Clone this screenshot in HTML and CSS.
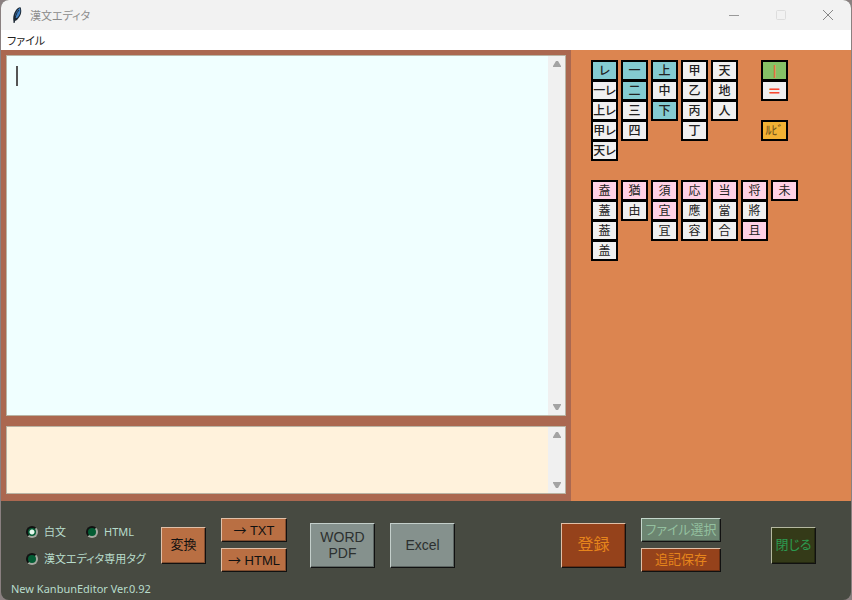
FILE: index.html
```html
<!DOCTYPE html>
<html lang="ja">
<head>
    <meta charset="UTF-8">
    <meta name="viewport" content="width=device-width, initial-scale=1.0">
    <title>漢文エディタ</title>
    <link rel="stylesheet" href="styles.css">
</head>
<body>
    <div class="window">
        <header class="titlebar">
            <svg class="app-icon" width="16" height="18" viewBox="0 0 16 18">
                <path d="M5 17 C3 12 5 5 9 2 C11 1 12 1 12 3 C13 7 11 11 8 14 L6 15 Z" fill="#1c2733"/>
                <path d="M6 12 C6 7 8 4 11 2 C12 6 11 9 8 12 Z" fill="#3f7fc1"/>
                <path d="M5 17 C6 12 7 7 10 4" fill="none" stroke="#1c2733" stroke-width="1"/>
            </svg>
            <span class="title">漢文エディタ</span>
            <div class="window-buttons">
                <button class="window-btn" aria-label="最小化">
                    <svg width="12" height="12" viewBox="0 0 12 12"><path d="M1 6.5H11" stroke="#999"/></svg>
                </button>
                <button class="window-btn" aria-label="最大化" disabled>
                    <svg width="12" height="12" viewBox="0 0 12 12"><rect x="1.5" y="1.5" width="9" height="9" rx="1" fill="none" stroke="#ddd"/></svg>
                </button>
                <button class="window-btn" aria-label="閉じる">
                    <svg width="12" height="12" viewBox="0 0 12 12"><path d="M1 1L11 11M11 1L1 11" stroke="#888" fill="none"/></svg>
                </button>
            </div>
        </header>

        <nav class="menubar">
            <button class="menu-item">ファイル</button>
        </nav>

        <main class="main">
            <section class="editor">
                <div class="text-area text-main">
                    <textarea aria-label="本文"></textarea>
                    <span class="caret"></span>
                    <div class="scrollbar">
                        <svg width="10" height="8" viewBox="0 0 10 8"><path d="M4 1H6L9 6V7H1V6Z" fill="#a3a3a3"/></svg>
                        <svg width="10" height="8" viewBox="0 0 10 8"><path d="M4 7H6L9 2V1H1V2Z" fill="#a3a3a3"/></svg>
                    </div>
                </div>
                <div class="text-area text-sub">
                    <textarea aria-label="変換結果"></textarea>
                    <div class="scrollbar">
                        <svg width="10" height="8" viewBox="0 0 10 8"><path d="M4 1H6L9 6V7H1V6Z" fill="#a3a3a3"/></svg>
                        <svg width="10" height="8" viewBox="0 0 10 8"><path d="M4 7H6L9 2V1H1V2Z" fill="#a3a3a3"/></svg>
                    </div>
                </div>
            </section>

            <aside class="palette">
                <div class="keys keys-kaeriten">
                    <div class="key-col">
                        <button class="key blue">レ</button>
                        <button class="key">一レ</button>
                        <button class="key">上レ</button>
                        <button class="key">甲レ</button>
                        <button class="key">天レ</button>
                    </div>
                    <div class="key-col">
                        <button class="key blue">一</button>
                        <button class="key blue">二</button>
                        <button class="key">三</button>
                        <button class="key">四</button>
                    </div>
                    <div class="key-col">
                        <button class="key blue">上</button>
                        <button class="key">中</button>
                        <button class="key blue">下</button>
                    </div>
                    <div class="key-col">
                        <button class="key">甲</button>
                        <button class="key">乙</button>
                        <button class="key">丙</button>
                        <button class="key">丁</button>
                    </div>
                    <div class="key-col">
                        <button class="key">天</button>
                        <button class="key">地</button>
                        <button class="key">人</button>
                    </div>
                    <div class="key-col marks">
                        <button class="key green">|</button>
                        <button class="key red">＝</button>
                        <button class="key ruby">ﾙﾋﾞ</button>
                    </div>
                </div>

                <div class="keys keys-saidoku">
                    <div class="key-col">
                        <button class="key pink">盍</button>
                        <button class="key">蓋</button>
                        <button class="key">葢</button>
                        <button class="key">盖</button>
                    </div>
                    <div class="key-col">
                        <button class="key pink">猶</button>
                        <button class="key">由</button>
                    </div>
                    <div class="key-col">
                        <button class="key pink">須</button>
                        <button class="key pink">宜</button>
                        <button class="key">冝</button>
                    </div>
                    <div class="key-col">
                        <button class="key pink">応</button>
                        <button class="key">應</button>
                        <button class="key">容</button>
                    </div>
                    <div class="key-col">
                        <button class="key pink">当</button>
                        <button class="key">當</button>
                        <button class="key">合</button>
                    </div>
                    <div class="key-col">
                        <button class="key pink">将</button>
                        <button class="key">將</button>
                        <button class="key pink">且</button>
                    </div>
                    <div class="key-col">
                        <button class="key pink">未</button>
                    </div>
                </div>
            </aside>
        </main>

        <footer class="footer">
            <div class="controls">
                <div class="modes" role="radiogroup" aria-label="形式">
                    <label><input type="radio" name="mode" checked>白文</label>
                    <label><input type="radio" name="mode">HTML</label>
                    <label class="wide"><input type="radio" name="mode">漢文エディタ専用タグ</label>
                </div>
                <button class="btn btn-small btn-convert">変換</button>
                <div class="btn-stack stack-out">
                    <button class="btn btn-convert"><span class="arrow">→</span> TXT</button>
                    <button class="btn btn-convert"><span class="arrow">→</span> HTML</button>
                </div>
                <button class="btn btn-large btn-export word">WORD<br>PDF</button>
                <button class="btn btn-large btn-export">Excel</button>
                <button class="btn btn-large btn-save register">登録</button>
                <div class="btn-stack stack-file">
                    <button class="btn btn-file">ファイル選択</button>
                    <button class="btn btn-save">追記保存</button>
                </div>
                <button class="btn btn-small btn-close">閉じる</button>
            </div>
            <p class="version">New KanbunEditor Ver.0.92</p>
        </footer>
    </div>
</body>
</html>
```
FILE: styles.css
```css
* {
    box-sizing: border-box;
}

body {
    margin: 0;
    background-color: #8a8080;
    font-family: "Noto Sans", "Noto Sans CJK JP", sans-serif;
    font-size: 11px;
    font-feature-settings: "palt";
}

button {
    font-family: inherit;
    font-feature-settings: inherit;
    padding: 0;
    white-space: nowrap;
}

.window {
    display: flex;
    flex-direction: column;
    min-height: 100vh;
    margin: 0 1px;
    border-radius: 8px;
    overflow: hidden;
    background-color: #474a41;
}

/* title bar and menu */
.titlebar {
    display: flex;
    align-items: center;
    height: 30px;
    padding-left: 8px;
    background-color: #f2f2f2;
}

.title {
    margin-left: 5px;
    color: #8c8c8c;
}

.window-buttons {
    display: flex;
    margin-left: auto;
}

.window-btn {
    display: flex;
    align-items: center;
    justify-content: center;
    width: 47px;
    height: 30px;
    border: none;
    background: none;
}

.menubar {
    display: flex;
    height: 20px;
    padding-left: 6px;
    background-color: #fff;
}

.menu-item {
    border: none;
    background: none;
    color: #222;
    font-size: 11px;
}

/* text areas */
.main {
    display: flex;
    flex: 1;
}

.editor {
    display: flex;
    flex: 1;
    flex-direction: column;
    gap: 10px;
    padding: 5px 5px 7px;
    background-color: #ab6850;
}

.text-area {
    display: flex;
    position: relative;
    border: 1px solid #b9b4a4;
}

.text-area textarea {
    flex: 1;
    min-width: 0;
    padding: 10px;
    border: none;
    outline: none;
    resize: none;
    font-size: 16px;
}

.text-main {
    flex: 1;
}

.text-main textarea {
    background-color: #f0ffff;
}

.text-sub {
    height: 68px;
}

.text-sub textarea {
    background-color: #fff2dc;
}

.caret {
    position: absolute;
    top: 10px;
    left: 9px;
    width: 2px;
    height: 20px;
    background-color: #555;
}

.scrollbar {
    display: flex;
    flex-direction: column;
    align-items: center;
    justify-content: space-between;
    width: 17px;
    padding: 4px 0;
    background-color: #f0f0f0;
}

/* key palette */
.palette {
    width: 280px;
    padding: 10px 20px;
    background-color: #dc8550;
}

.keys {
    display: flex;
    gap: 3px;
}

.keys-kaeriten {
    min-height: 120px;
}

.key-col {
    display: flex;
    flex-direction: column;
}

.key {
    width: 27px;
    height: 21px;
    margin-bottom: -1px;
    border: 2px solid #000;
    background-color: #f0f0f0;
    color: #222;
    font-size: 12px;
    line-height: 16px;
    overflow: hidden;
}

.keys-kaeriten .key {
    font-weight: 500;
}

.key.blue {
    background-color: #84cbd1;
}

.key.pink {
    background-color: #ffd2e6;
}

.keys-kaeriten .key.green {
    background-color: #86c166;
    color: #f4683c;
    font-weight: bold;
}

.keys-kaeriten .key.red {
    color: #f84830;
    font-size: 14px;
    font-weight: bold;
}

.key.ruby {
    margin-top: 20px;
    background-color: #f2b134;
    color: #7a5a1e;
}

.marks {
    margin-left: 20px;
}

/* bottom controls */
.footer {
    padding: 17px 35px 0 10px;
}

.controls {
    display: flex;
    align-items: center;
    gap: 15px;
    height: 54px;
}

.modes {
    display: grid;
    grid-template-columns: 60px 1fr;
    gap: 9px 0;
    width: 120px;
    margin-left: 15px;
    color: #b7dccb;
}

.modes label {
    display: flex;
    align-items: center;
    gap: 6px;
    line-height: 18px;
    white-space: nowrap;
}

.modes .wide {
    grid-column: 1 / 3;
}

.modes input {
    appearance: none;
    flex: none;
    width: 12px;
    height: 12px;
    margin: 0;
    border: 2px solid;
    border-color: #111 #a5a8a0 #a5a8a0 #111;
    border-radius: 50%;
    background-color: #045c34;
}

.modes input:checked {
    background-image: radial-gradient(circle, #e4f7ec 2px, transparent 3px);
}

.btn {
    border: 1px solid;
    border-color: #e0c0a8 #111 #111 #e0c0a8;
    box-shadow: inset -1px -1px 0 rgba(0, 0, 0, 0.3);
    font-family: "Liberation Sans", "Noto Sans CJK JP", sans-serif;
    font-size: 13px;
    line-height: 16px;
}

.btn-small {
    width: 45px;
    height: 37px;
}

.btn-large {
    width: 65px;
    height: 45px;
    font-size: 14px;
}

.btn-stack {
    display: flex;
    flex-direction: column;
    gap: 6px;
}

.btn-stack .btn {
    height: 24px;
}

.stack-out {
    width: 66px;
}

.stack-file {
    width: 80px;
}

.arrow {
    font-family: "Noto Sans CJK JP", sans-serif;
}

.btn-convert {
    background-color: #b96f43;
    color: #111;
}

.btn-export {
    border-color: #c4cfcb #111 #111 #c4cfcb;
    background-color: #85918d;
    color: #2c302f;
}

.word {
    margin-left: 8px;
}

.btn-save {
    background-color: #95421b;
    color: #e6851c;
}

.register {
    margin-left: auto;
    font-size: 16px;
}

.btn-file {
    border-color: #c4d6cb #111 #111 #c4d6cb;
    background-color: #6c8571;
    color: #93c09f;
}

.btn-close {
    margin-left: 35px;
    border-color: #b5b8a0 #111 #111 #b5b8a0;
    background-color: #343a18;
    color: #2c9a50;
}

.version {
    margin: 9px 0 0;
    padding-bottom: 3px;
    color: #b7dccb;
    line-height: 16px;
}
```
